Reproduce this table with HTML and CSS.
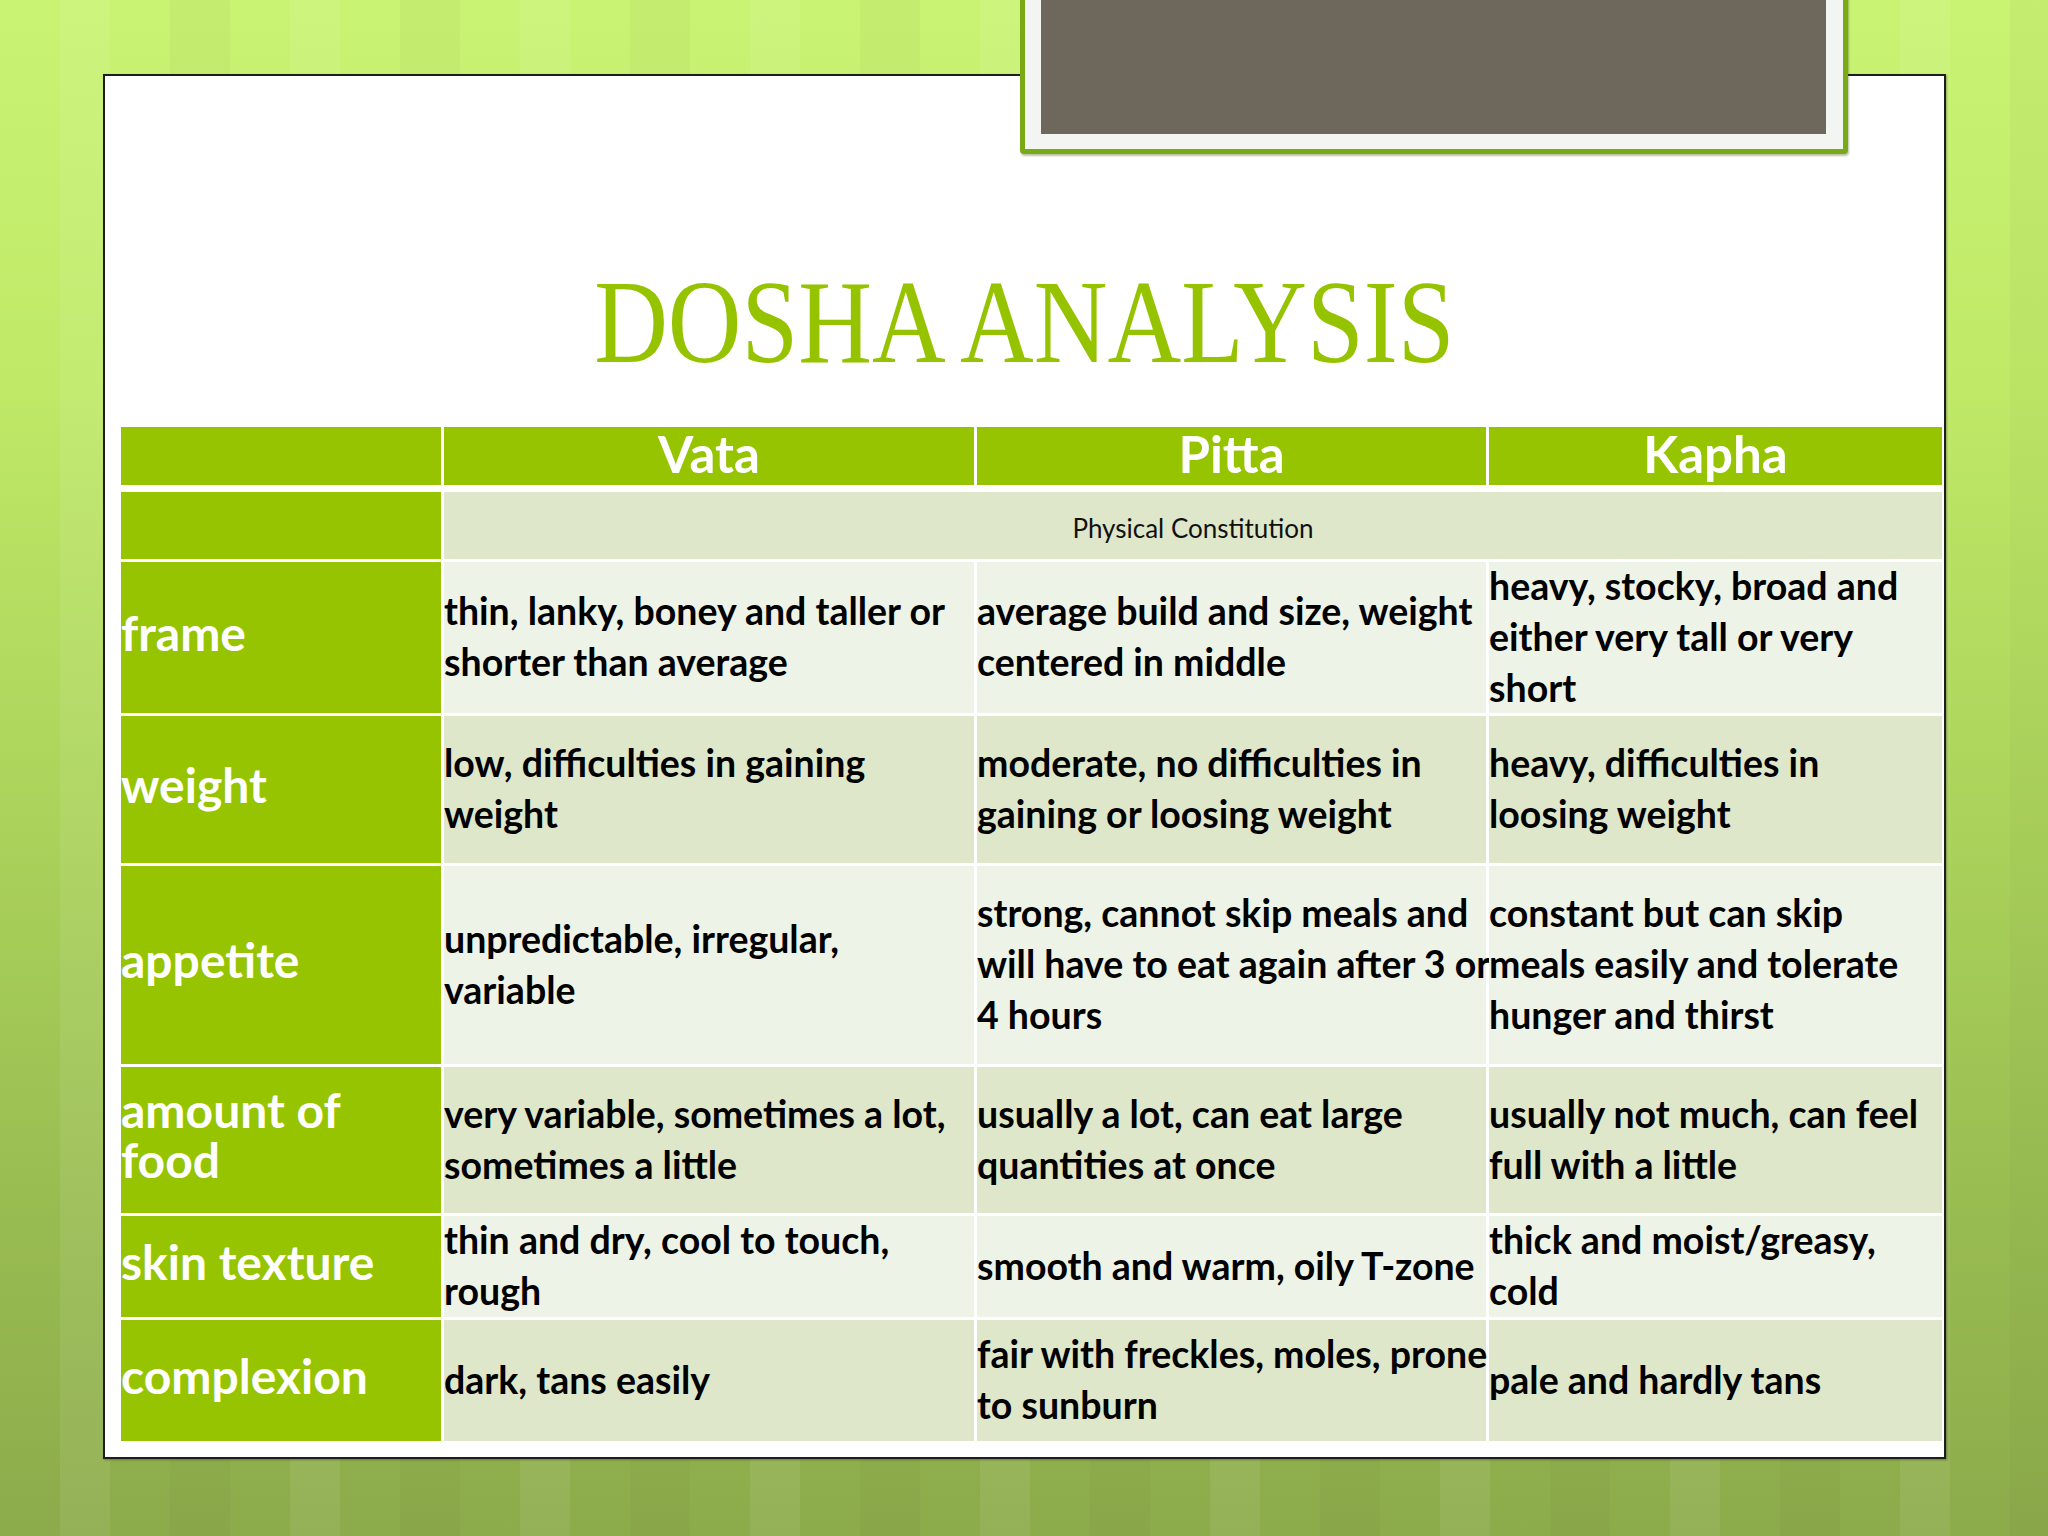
FILE: index.html
```html
<!DOCTYPE html>
<html>
<head>
<meta charset="utf-8">
<link rel="stylesheet" href="styles.css">
</head>
<body>
<div class="slide">
  <div class="panel">
    <h1 class="title"><span>DOSHA ANALYSIS</span></h1>
    <div class="table">
      <div class="row head">
        <div class="c lab"></div>
        <div class="c h">Vata</div>
        <div class="c h">Pitta</div>
        <div class="c h">Kapha</div>
      </div>
      <div class="row sub">
        <div class="c lab"></div>
        <div class="c span3">Physical Constitution</div>
      </div>
      <div class="row r1 light">
        <div class="c lab">frame</div>
        <div class="c t">thin, lanky, boney and taller or<br>shorter than average</div>
        <div class="c t">average build and size, weight<br>centered in middle</div>
        <div class="c t">heavy, stocky, broad and<br>either very tall or very<br>short</div>
      </div>
      <div class="row r2 dark">
        <div class="c lab">weight</div>
        <div class="c t">low, difficulties in gaining<br>weight</div>
        <div class="c t">moderate, no difficulties in<br>gaining or loosing weight</div>
        <div class="c t">heavy, difficulties in<br>loosing weight</div>
      </div>
      <div class="row r3 light">
        <div class="c lab">appetite</div>
        <div class="c t">unpredictable, irregular,<br>variable</div>
        <div class="c t">strong, cannot skip meals and<br>will have to eat again after 3 or<br>4 hours</div>
        <div class="c t">constant but can skip<br>meals easily and tolerate<br>hunger and thirst</div>
      </div>
      <div class="row r4 dark">
        <div class="c lab">amount of<br>food</div>
        <div class="c t">very variable, sometimes a lot,<br>sometimes a little</div>
        <div class="c t">usually a lot, can eat large<br>quantities at once</div>
        <div class="c t">usually not much, can feel<br>full with a little</div>
      </div>
      <div class="row r5 light">
        <div class="c lab">skin texture</div>
        <div class="c t">thin and dry, cool to touch,<br>rough</div>
        <div class="c t">smooth and warm, oily T-zone</div>
        <div class="c t">thick and moist/greasy,<br>cold</div>
      </div>
      <div class="row r6 dark">
        <div class="c lab">complexion</div>
        <div class="c t">dark, tans easily</div>
        <div class="c t">fair with freckles, moles, prone<br>to sunburn</div>
        <div class="c t">pale and hardly tans</div>
      </div>
    </div>
  </div>
  <div class="photo"><div class="photo-fill"></div></div>
</div>
</body>
</html>
```

FILE: styles.css
```css
* { box-sizing: border-box; }
html, body { margin: 0; padding: 0; }
body { width: 2048px; height: 1536px; overflow: hidden; }

.slide {
  position: relative;
  width: 2048px;
  height: 1536px;
  padding-top: 74px;
  padding-left: 103px;
  background:
    repeating-linear-gradient(90deg,
      rgba(255,255,255,0.00) 0px, rgba(255,255,255,0.00) 60px,
      rgba(255,255,255,0.07) 60px, rgba(255,255,255,0.07) 110px,
      rgba(255,255,255,0.00) 110px, rgba(255,255,255,0.00) 170px,
      rgba(0,0,0,0.025) 170px, rgba(0,0,0,0.025) 230px),
    linear-gradient(180deg, #c9f373 0%, #bfe967 25%, #aad15a 55%, #98bb51 80%, #8cab4b 100%);
  font-family: Lato, "Liberation Sans", sans-serif;
}

.panel {
  width: 1843px;
  height: 1385px;
  background: #ffffff;
  border: 2px solid #1e1e1e;
  box-shadow: 1px 1px 2px rgba(0,0,0,0.3);
  padding: 188px 2px 0 16px;
  display: flex;
  flex-direction: column;
}

.title {
  margin: 0 0 45px 0;
  height: 118px;
  font-family: "Liberation Serif", "Times New Roman", serif;
  font-weight: normal;
  font-size: 118px;
  line-height: 118px;
  color: #96c300;
  text-align: center;
  padding-right: 14px;
}
.title span {
  display: inline-block;
  transform: scaleX(0.865);
  transform-origin: center;
}

.table {
  display: flex;
  flex-direction: column;
  gap: 3px;
  width: 1821px;
}

.row {
  display: grid;
  grid-template-columns: 320px 530px 509px 453px;
  grid-template-rows: minmax(0, 1fr);
  column-gap: 3px;
  flex: none;
}
.head { height: 58px; margin-bottom: 4px; }
.sub { height: 67px; }
.r1 { height: 151px; }
.r2 { height: 147px; }
.r3 { height: 198px; }
.r4 { height: 146px; }
.r5 { height: 101px; }
.r6 { height: 121px; }

.c {
  display: flex;
  align-items: center;
  white-space: nowrap;
  overflow: visible;
  min-height: 0;
}

.lab {
  background: #96c400;
  color: #ffffff;
  font-weight: 700;
  font-size: 48px;
  line-height: 50px;
  padding-bottom: 10px;
}

.h {
  background: #96c400;
  color: #ffffff;
  font-weight: 700;
  font-size: 51px;
  justify-content: center;
  line-height: 58px;
  padding-bottom: 5px;
}

.span3 {
  grid-column: 2 / 5;
  background: #dee7ca;
  justify-content: center;
  font-size: 26px;
  font-weight: 400;
  color: #111;
  padding-top: 4px;
}

.t {
  font-weight: 700;
  font-size: 37.5px;
  line-height: 51px;
  color: #000;
  padding-bottom: 3px;
}
.light .t { background: #eef3e8; }
.dark .t { background: #dee7ca; }

.photo {
  position: absolute;
  left: 1020px;
  top: -30px;
  width: 828px;
  height: 184px;
  border: 5px solid #79a914;
  border-radius: 0 0 4px 4px;
  background: #f3f5f3;
  padding: 25px 17px 15px 16px;
  box-shadow: 1px 2px 2px rgba(60,80,20,0.35);
}
.photo-fill {
  width: 100%;
  height: 100%;
  background: #6e675b;
}
```
